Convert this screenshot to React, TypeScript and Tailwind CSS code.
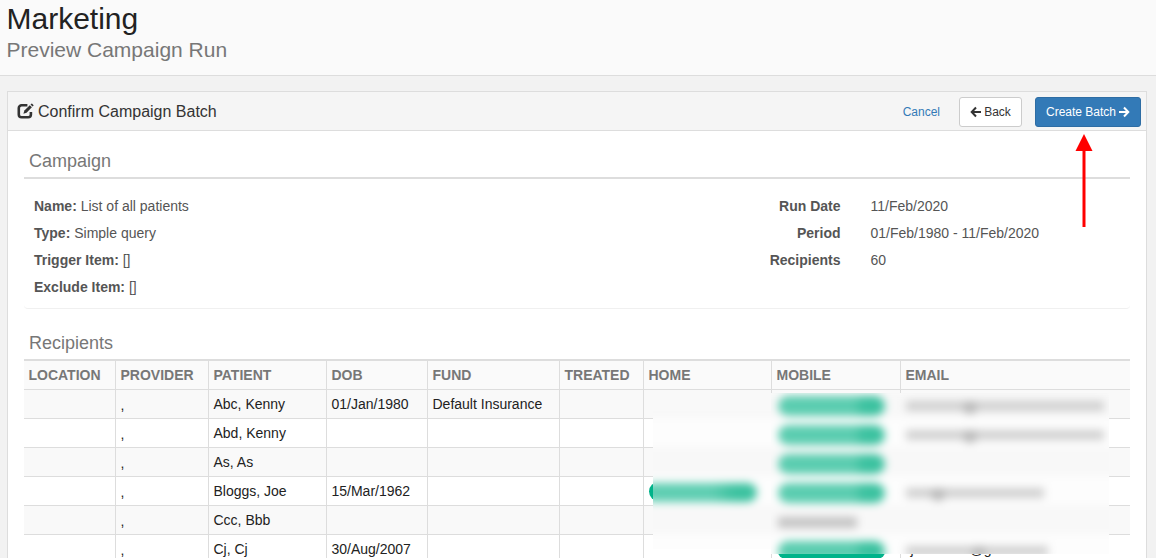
import React from 'react';

interface Recipient {
  patient: string;
  dob?: string;
  fund?: string;
  home?: boolean;
  mobile?: 'badge' | 'plain';
  emailWidth?: number;
  atOffset?: number;
}

const recipients: Recipient[] = [
  { patient: 'Abc, Kenny', dob: '01/Jan/1980', fund: 'Default Insurance', mobile: 'badge', emailWidth: 198, atOffset: 57 },
  { patient: 'Abd, Kenny', mobile: 'badge', emailWidth: 198, atOffset: 57 },
  { patient: 'As, As', mobile: 'badge' },
  { patient: 'Bloggs, Joe', dob: '15/Mar/1962', home: true, mobile: 'badge', emailWidth: 138, atOffset: 25 },
  { patient: 'Ccc, Bbb', mobile: 'plain' },
  { patient: 'Cj, Cj', dob: '30/Aug/2007', mobile: 'badge', emailWidth: 142, atOffset: 66 },
];

const columns = [
  { label: 'LOCATION', width: 'w-[92px]' },
  { label: 'PROVIDER', width: 'w-[93px]' },
  { label: 'PATIENT', width: 'w-[118px]' },
  { label: 'DOB', width: 'w-[101px]' },
  { label: 'FUND', width: 'w-[132px]' },
  { label: 'TREATED', width: 'w-[84px]' },
  { label: 'HOME', width: 'w-[128px]' },
  { label: 'MOBILE', width: 'w-[129px]' },
  { label: 'EMAIL', width: 'w-[229px]' },
];

const campaignDetails = [
  { label: 'Name:', value: 'List of all patients' },
  { label: 'Type:', value: 'Simple query' },
  { label: 'Trigger Item:', value: '[]' },
  { label: 'Exclude Item:', value: '[]' },
];

const runDetails = [
  { label: 'Run Date', value: '11/Feb/2020' },
  { label: 'Period', value: '01/Feb/1980 - 11/Feb/2020' },
  { label: 'Recipients', value: '60' },
];

const EditIcon = () => (
  <svg width="17" height="16" viewBox="0 0 17 16" className="mb-[2px] shrink-0">
    <path
      d="M10.400 2.300H4.600A2.800 2.800 0 0 0 1.800 5.100v6.300a2.800 2.800 0 0 0 2.800 2.800h6.500a2.800 2.800 0 0 0 2.800-2.800V9"
      fill="none"
      stroke="#333"
      strokeWidth="2.6"
    />
    <path d="M6.400 10.800l1-3.300 5.400-5.300 2.100 2.100-5.300 5.400z" fill="#333" />
    <path d="M13.500 1.600l.9-.9q.4-.4.8 0l1.200 1.200q.4.400 0 .8l-.9.900z" fill="#333" />
  </svg>
);

const ArrowIcon = ({ flip = false }: { flip?: boolean }) => (
  <svg width="11" height="12" viewBox="0 0 11 12" className={flip ? 'rotate-180' : ''}>
    <path d="M6 1.500L1.700 6 6 10.500M2 6h9" fill="none" stroke="currentColor" strokeWidth="2" />
  </svg>
);

const SectionTitle = ({ children }: { children: React.ReactNode }) => (
  <h3 className="h-[34px] border-b-2 border-[#ddd] px-[5px] text-[18px] leading-[33px] text-[#777]">
    {children}
  </h3>
);

const Badge = () => <span className="block h-[19px] w-[109px] rounded-full bg-[#00b38a]" />;

// Soft cover over the private contact details
const ContactMask = () => (
  <div className="pointer-events-none absolute left-[629px] top-[32px] flex h-[161px] w-[456px]">
    <div className="mt-[18px] h-[138px] w-[118px] overflow-hidden bg-[#f9f9f9]">
      <div className="-mt-[22px] -mr-[10px] -ml-[10px] blur-[4px]">
        {recipients.map((item, index) => (
          <div key={index} className="h-[29px] pt-[7px] odd:bg-[#f8f8f8] even:bg-[#fdfdfd]">
            {item.home && (
              <div className="h-[19px] w-[114px] rounded-full bg-linear-to-r from-[#5fceb2] from-60% to-[#3cc2a0] to-80%" />
            )}
          </div>
        ))}
      </div>
    </div>
    <div className="h-[161px] w-[338px] overflow-hidden bg-[#f9f9f9]">
      <div className="-mt-[4px] -mr-[10px] -ml-[10px] blur-[4px]">
        {recipients.map((item, index) => (
          <div key={index} className="flex h-[29px] pl-[17px] pt-[7px] odd:bg-[#f8f8f8] even:bg-[#fdfdfd]">
            <div className="w-[128px] shrink-0">
              {item.mobile === 'badge' && (
                <div className="h-[20px] w-[107px] rounded-full bg-linear-to-r from-[#5bcdb0] from-70% to-[#3cc2a0] to-80%" />
              )}
              {item.mobile === 'plain' && <div className="mt-[5px] h-[11px] w-[79px] bg-[#c4c4c4]" />}
            </div>
            {item.emailWidth && (
              <div className="mt-[5px] h-[10px] bg-[#d0d0d0]" style={{ width: item.emailWidth }}>
                <div className="h-[13px] w-[14px] rounded-full bg-[#b8b8b8]" style={{ marginLeft: item.atOffset }} />
              </div>
            )}
          </div>
        ))}
      </div>
    </div>
  </div>
);

const RecipientsTable = () => (
  <div className="relative">
    <table className="w-[1106px] table-fixed border-separate border-spacing-0 text-[14px] leading-[20px]">
      <thead>
        <tr className="bg-[#fafafa]">
          {columns.map((column) => (
            <th
              key={column.label}
              className={`${column.width} h-[29px] border-r border-b border-[#ddd] px-[4.5px] py-0 text-left font-bold text-[#777] last:border-r-0`}
            >
              {column.label}
            </th>
          ))}
        </tr>
      </thead>
      <tbody className="text-[#222]">
        {recipients.map((item) => (
          <tr
            key={item.patient}
            className="odd:bg-[#f9f9f9] [&>td]:h-[29px] [&>td]:border-r [&>td]:border-b [&>td]:border-[#ddd] [&>td]:px-[4.5px] [&>td]:py-0 [&>td:last-child]:border-r-0"
          >
            <td />
            <td>
              <span className="relative top-px">,</span>
            </td>
            <td>{item.patient}</td>
            <td>{item.dob}</td>
            <td>{item.fund}</td>
            <td />
            <td>{item.home && <Badge />}</td>
            <td>{item.mobile === 'badge' && <Badge />}</td>
            <td>
              {item.patient === 'Cj, Cj' && (
                <span className="flex gap-[56px] pl-[5px]">
                  <span>j</span>
                  <span>@g</span>
                </span>
              )}
            </td>
          </tr>
        ))}
      </tbody>
    </table>
    <ContactMask />
  </div>
);

const App = () => {
  return (
    <div className="h-[558px] w-[1156px] overflow-hidden bg-[#f2f2f2] font-['Liberation_Sans',Arial,sans-serif]">
      {/* Page heading */}
      <header className="h-[76px] border-b border-[#ddd] bg-[#fafafa] pl-[6.5px] pt-[2px]">
        <h1 className="text-[30px] leading-[33px] text-[#222]">Marketing</h1>
        <h2 className="text-[21px] leading-[30px] text-[#777]">Preview Campaign Run</h2>
      </header>

      <main className="relative mx-[7px] mt-[15px] w-[1140px] border border-[#ddd] bg-white">
        <div className="flex h-[39px] items-center border-b border-[#ddd] bg-[#f5f5f5] pl-[9px] pr-[5px] pt-[2px]">
          <EditIcon />
          <span className="ml-1 text-[16px] text-[#333]">Confirm Campaign Batch</span>
          <div className="ml-auto flex items-center text-[12px]">
            <button className="mr-[19px] text-[#337ab7]">Cancel</button>
            <button className="mr-[13px] flex h-[30px] w-[63px] items-center justify-center gap-[3px] rounded-[3px] border border-[#ccc] bg-white text-[#333]">
              <ArrowIcon />
              Back
            </button>
            <button className="flex h-[30px] w-[106px] items-center justify-center gap-[3px] rounded-[3px] border border-[#2e6da4] bg-[#337ab7] text-white">
              Create Batch
              <ArrowIcon flip />
            </button>
          </div>
        </div>

        <div className="px-4 pt-[14px]">
          <SectionTitle>Campaign</SectionTitle>
          <div className="flex h-[130px] justify-between rounded-b border-b border-[#f0f0f0] px-[10px] pt-[14px] text-[14px] leading-[27px] text-[#555]">
            <div>
              {campaignDetails.map((item) => (
                <p key={item.label}>
                  <b>{item.label}</b> {item.value}
                </p>
              ))}
            </div>
            <div className="w-[359.5px]">
              {runDetails.map((item) => (
                <div key={item.label} className="flex">
                  <b className="w-[80px] text-right">{item.label}</b>
                  <span className="ml-[30px]">{item.value}</span>
                </div>
              ))}
            </div>
          </div>
          <div className="mt-[18px]">
            <SectionTitle>Recipients</SectionTitle>
            <RecipientsTable />
          </div>
        </div>

        {/* Callout arrow */}
        <svg className="absolute left-[1066px] top-[42px]" width="20" height="93" viewBox="0 0 20 93">
          <path d="M10 10V93" stroke="#ff0000" strokeWidth="3" />
          <path d="M10 0l8.500 17h-17z" fill="#ff0000" />
        </svg>
      </main>
    </div>
  );
};

export default App;
